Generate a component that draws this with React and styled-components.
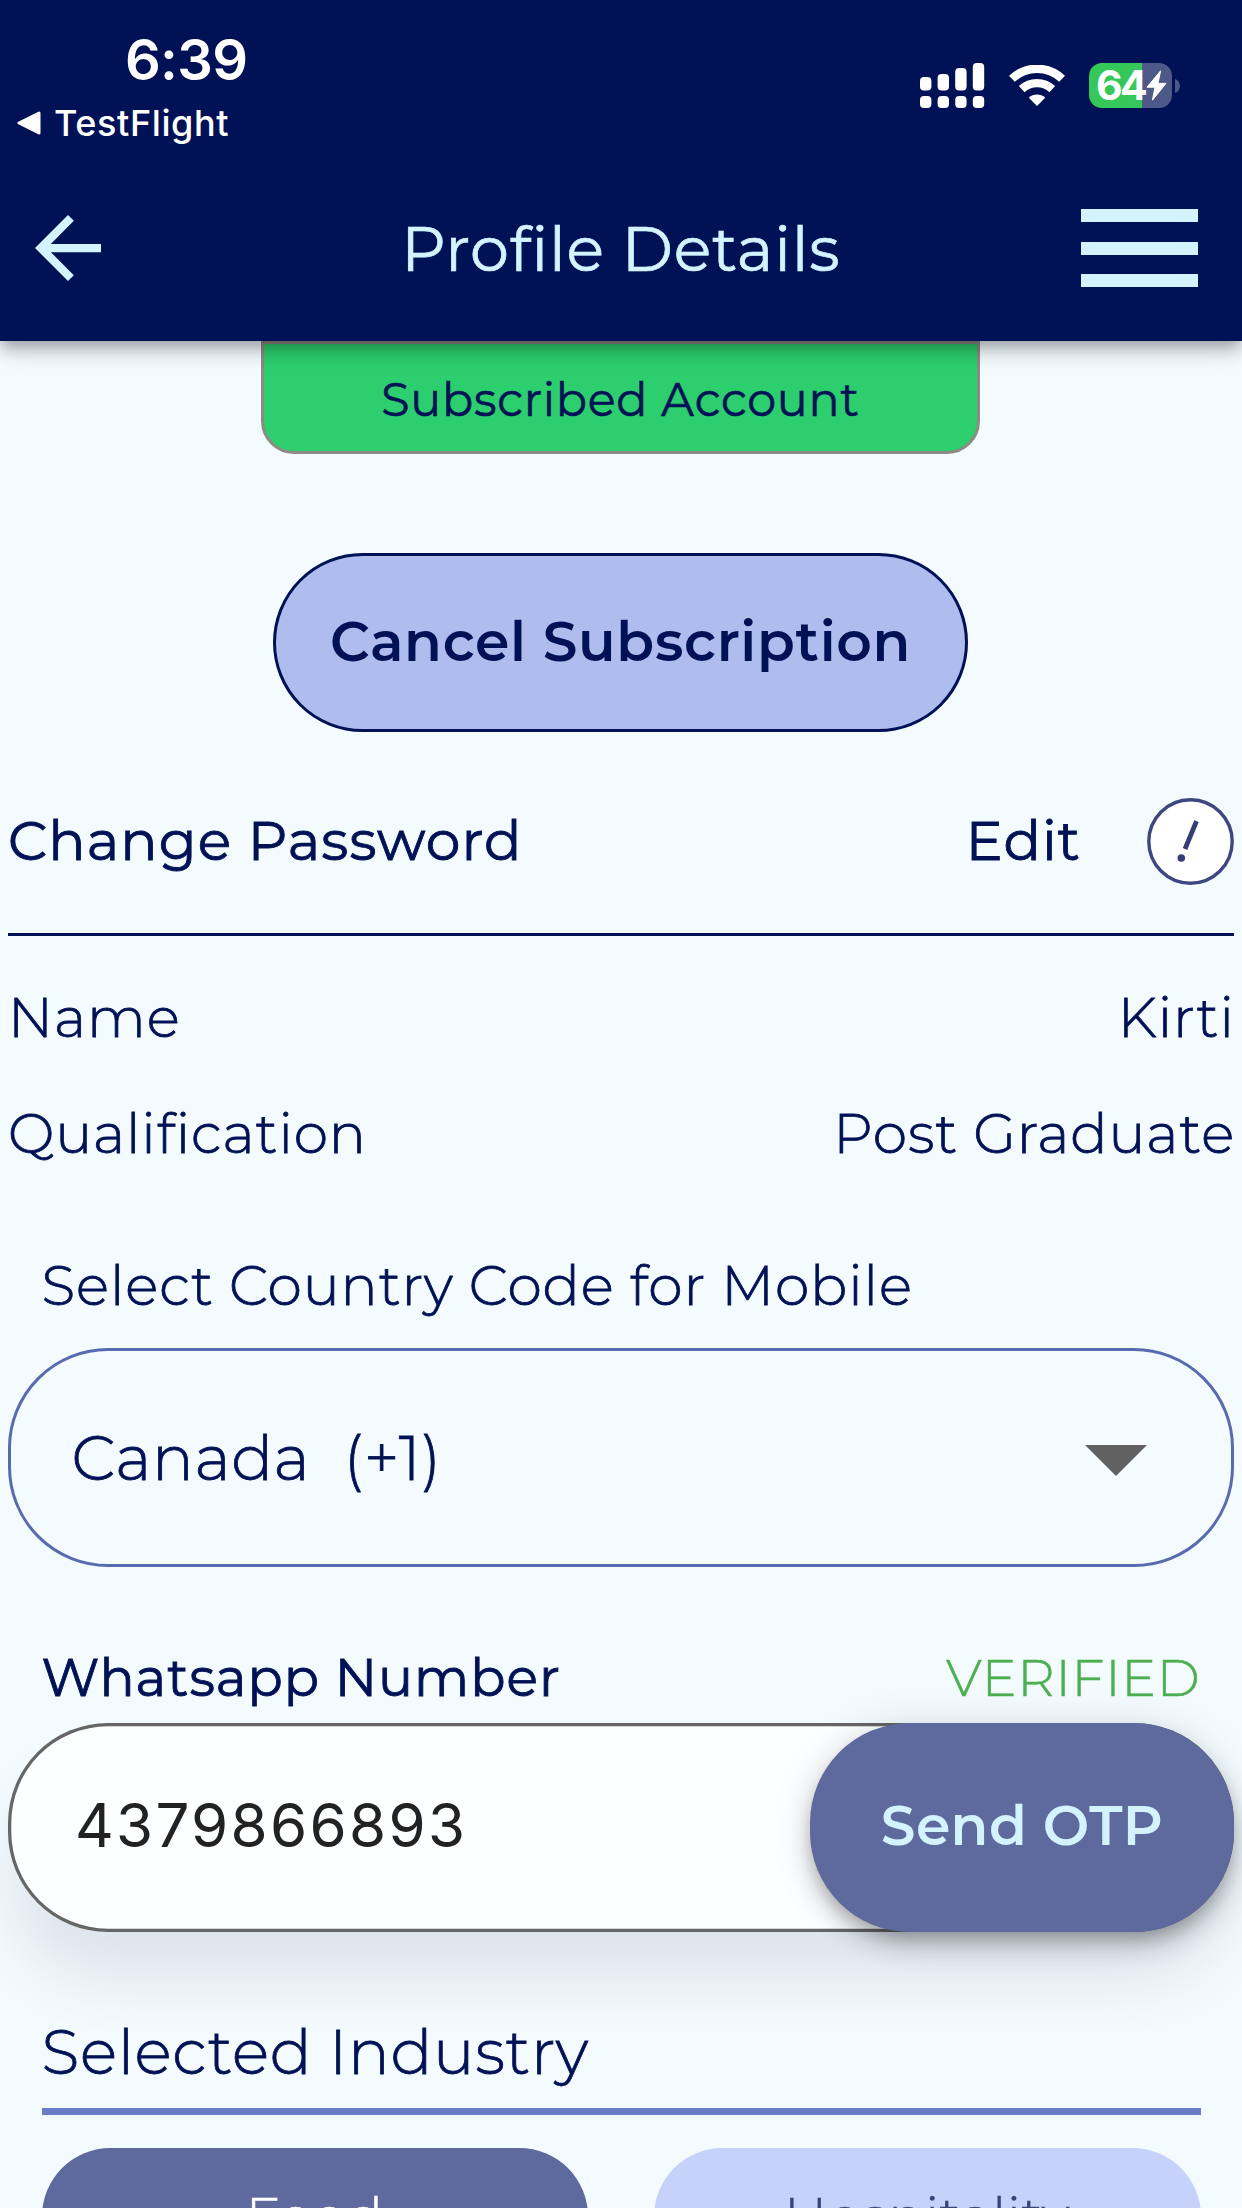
import React from "react";
import styled, { createGlobalStyle } from "styled-components";

const NAVY = "#001255";
const ICE = "#d3f4ff";
const SLATE = "#5e6a9e";
const brandFont = `"Montserrat", "Inter", sans-serif`;
const systemFont = `"Inter", "Roboto", sans-serif`;

const GlobalStyle = createGlobalStyle`
  *, *::before, *::after { box-sizing: border-box; }
  body {
    margin: 0;
    background: #f4fbff;
    color: ${NAVY};
    font-family: ${brandFont};
  }
  button { font-family: inherit; border: 0; padding: 0; margin: 0; color: inherit; }
  svg { display: block; }
`;

const Screen = styled.div`
  width: 1242px;
  height: 2208px;
  overflow: hidden;
  display: flex;
  flex-direction: column;
  background: #f4fbff;
`;

const Header = styled.header`
  position: relative;
  z-index: 1;
  flex: none;
  height: 341px;
  background: ${NAVY};
  box-shadow:
    0 6px 12px -3px rgba(0, 0, 0, 0.2),
    0 12px 15px 0 rgba(0, 0, 0, 0.14),
    0 3px 30px 0 rgba(0, 0, 0, 0.12);
`;

const StatusBar = styled.div`
  height: 156px;
  display: flex;
  justify-content: space-between;
  color: #fff;
  font-family: ${systemFont};
`;

const ClockColumn = styled.div`
  display: flex;
  flex-direction: column;
  padding-top: 28px;
`;

const Clock = styled.div`
  padding-left: 125px;
  font-size: 56px;
  font-weight: 600;
  line-height: 64px;
  letter-spacing: -0.7px;
`;

const BackToApp = styled.div`
  display: flex;
  align-items: center;
  gap: 13px;
  margin-top: 7px;
  padding-left: 17px;
  font-size: 36px;
  font-weight: 500;
  line-height: 48px;
  letter-spacing: 0.6px;
`;

const StatusIcons = styled.div`
  display: flex;
  align-items: flex-start;
  padding: 63px 62px 0 0;
`;

const WifiSlot = styled.div`
  margin: 2px 24.5px 0 24px;
`;

const Battery = styled.div`
  display: flex;
  align-items: center;
  gap: 3px;
`;

const BatteryBody = styled.div`
  display: flex;
  align-items: center;
  width: 83px;
  height: 45px;
  padding-left: 7px;
  border-radius: 13px;
  background: linear-gradient(to right, #35c759 64%, #4f5989 64%);
`;

const BatteryLevel = styled.span`
  width: 50px;
  font-size: 41px;
  font-weight: 700;
  line-height: 45px;
  letter-spacing: -2.6px;
`;

const NavBar = styled.nav`
  height: 185px;
  display: grid;
  grid-template-columns: 1fr auto 1fr;
  align-items: center;
  padding: 0 44.5px 1px 35px;
`;

const Title = styled.h1`
  margin: 1px 0 0 9px;
  color: ${ICE};
  font-size: 62px;
  font-weight: 400;
  line-height: 80px;
  letter-spacing: 0.8px;
  -webkit-text-stroke: 0.7px currentColor;
`;

const MenuButton = styled.button`
  justify-self: end;
  display: flex;
  flex-direction: column;
  gap: 19.5px;
  background: none;
`;

const MenuBar = styled.span`
  width: 117px;
  height: 13px;
  background: ${ICE};
`;

const Content = styled.main`
  display: flex;
  flex-direction: column;
  align-items: stretch;
  padding: 0 8px;
`;

const Badge = styled.div`
  align-self: center;
  width: 719px;
  height: 113px;
  margin-right: 1px;
  padding-top: 4px;
  border: 3px solid #8e8a86;
  border-radius: 0 0 33px 33px;
  background: #2dce6d;
  text-align: center;
  font-size: 46px;
  line-height: 104px;
  letter-spacing: 0.77px;
  -webkit-text-stroke: 0.6px currentColor;
`;

const CancelButton = styled.button`
  align-self: center;
  width: 695px;
  height: 179px;
  margin-top: 99px;
  margin-right: 1px;
  padding-bottom: 2px;
  border: 3.5px solid ${NAVY};
  border-radius: 90px;
  background: #afbcee;
  color: ${NAVY};
  font-size: 55.2px;
  font-weight: 600;
  letter-spacing: 0.7px;
`;

const PasswordRow = styled.div`
  display: flex;
  align-items: center;
  height: 87px;
  margin-top: 66px;
  font-size: 55.2px;
  letter-spacing: 1.12px;
  -webkit-text-stroke: 0.9px currentColor;
`;

const PasswordLabel = styled.span`
  flex: 1;
  padding-bottom: 3px;
`;

const EditLink = styled.span`
  margin-right: 66px;
  padding-bottom: 3px;
`;

const Divider = styled.hr`
  width: 100%;
  height: 3.5px;
  margin: 47.5px 0 24px;
  border: 0;
  background: ${NAVY};
`;

const DetailRow = styled.div`
  display: flex;
  justify-content: space-between;
  margin-right: -1px;
  font-size: 55.2px;
  font-weight: 300;
  line-height: 116px;
  letter-spacing: ${(p) => p.$tracking};
  -webkit-text-stroke: 0.8px currentColor;
`;

const FieldLabel = styled.div`
  margin: 54px 33.5px 22px;
  font-size: 55.2px;
  font-weight: 300;
  line-height: 80px;
  letter-spacing: 0.93px;
  -webkit-text-stroke: 0.8px currentColor;
`;

const Select = styled.div`
  display: flex;
  align-items: center;
  justify-content: space-between;
  height: 219px;
  padding: 0 84.5px 0 60.5px;
  border: 3.5px solid #566bb0;
  border-radius: 100px;
  font-size: 62px;
  font-weight: 300;
  letter-spacing: 0.6px;
  white-space: pre;
  -webkit-text-stroke: 0.8px currentColor;
`;

const CaretSlot = styled.div`
  padding-top: 6px;
`;

const PhoneHeading = styled.div`
  display: flex;
  justify-content: space-between;
  margin: 81px 33.5px 15px;
  font-size: 52px;
  line-height: 60px;
`;

const PhoneLabel = styled.span`
  letter-spacing: 1.03px;
  -webkit-text-stroke: 0.9px currentColor;
`;

const Verified = styled.span`
  color: #4caf50;
  font-weight: 300;
  letter-spacing: 0.75px;
  -webkit-text-stroke: 0.5px currentColor;
`;

const PhoneField = styled.div`
  display: flex;
  align-items: center;
  justify-content: space-between;
  height: 208.5px;
  border-radius: 100px;
  background: #fdfeff;
  box-shadow:
    inset 0 0 0 3.3px #666,
    0 50px 60px rgba(0, 8, 50, 0.09);
`;

const PhoneNumber = styled.span`
  padding: 0 0 5px 67px;
  color: #222;
  font-family: ${systemFont};
  font-size: 60px;
  letter-spacing: 2.3px;
`;

const OtpButton = styled.button`
  width: 424px;
  height: 208.5px;
  padding-bottom: 3px;
  border-radius: 100px;
  background: ${SLATE};
  color: ${ICE};
  font-size: 55.2px;
  font-weight: 600;
  letter-spacing: 0.4px;
  box-shadow:
    0 9px 15px -3px rgba(0, 0, 0, 0.2),
    0 15px 24px 0 rgba(0, 0, 0, 0.14),
    0 3px 42px 0 rgba(0, 0, 0, 0.12);
`;

const SectionTitle = styled.h2`
  margin: 80.5px 33.5px 0;
  padding-bottom: 16px;
  border-bottom: 7px solid #6a7cc5;
  font-size: 62px;
  font-weight: 300;
  line-height: 80px;
  letter-spacing: 0.72px;
  -webkit-text-stroke: 0.8px currentColor;
`;

const IndustryGrid = styled.div`
  display: grid;
  grid-template-columns: 1fr 1fr;
  gap: 66px;
  margin: 32.5px 33.5px 0;
`;

const IndustryPill = styled.div`
  height: 137px;
  border-radius: 70px;
  background: ${(p) => (p.$selected ? SLATE : "#c7d2fb")};
  color: ${(p) => (p.$selected ? "#fff" : "#3a4478")};
  text-align: center;
  font-size: 53px;
  font-weight: 300;
  line-height: 136px;
  letter-spacing: 1px;
  -webkit-text-stroke: 0.6px currentColor;
`;

const SignalIcon = () => (
  <svg width="65" height="45" viewBox="0 0 65 45" fill="#fff">
    {[14, 11, 5, 0].map((top, i) => (
      <g key={top}>
        <rect x={i * 17.6} y={top} width="11.4" height={27.5 - top} rx="4" />
        <rect x={i * 17.6} y="33" width="11.4" height="12" rx="4" />
      </g>
    ))}
  </svg>
);

const WifiIcon = () => (
  <svg width="56" height="41" viewBox="0 0 56 41" fill="none" stroke="#fff">
    <path d="M2.9 13.8a36.5 36.5 0 0 1 50.2 0" strokeWidth="8.4" />
    <path d="M12.7 24.1a22.5 22.5 0 0 1 30.6 0" strokeWidth="8.4" />
    <path d="M28 41l-8.2-8.3a12 12 0 0 1 16.4 0z" fill="#fff" stroke="none" />
  </svg>
);

const BoltIcon = () => (
  <svg width="21" height="31" viewBox="0 0 21 31">
    <path d="M14.6.8 1 17.2h8L6.4 30.2 20 13.4h-8z" fill="#fff" stroke="#fff" strokeLinejoin="round" />
  </svg>
);

const BatteryNub = () => (
  <svg width="5" height="14" viewBox="0 0 5 14">
    <path d="M0 0c3 1 5 4 5 7s-2 6-5 7z" fill="#4f5989" />
  </svg>
);

const CaretLeft = () => (
  <svg width="24" height="24" viewBox="0 0 24 24">
    <path d="M2 12 22 2v20z" fill="#fff" stroke="#fff" strokeWidth="3" strokeLinejoin="round" />
  </svg>
);

const ArrowBack = () => (
  <svg width="66" height="66" viewBox="4 4 16 16">
    <path fill={ICE} d="M20 11H7.83l5.59-5.59L12 4l-8 8 8 8 1.41-1.41L7.83 13H20v-2z" />
  </svg>
);

const CaretDown = () => (
  <svg width="62" height="31" viewBox="0 0 62 31">
    <path d="M0 0h62L31 31z" fill="#616161" />
  </svg>
);

const NoticeIcon = () => (
  <svg width="87" height="87" viewBox="0 0 87 87">
    <circle cx="43.5" cy="43.5" r="41.7" fill="#fff" stroke="#3f4780" strokeWidth="3.4" />
    <path d="M49.5 23.2 38 51" stroke="#343d78" strokeWidth="4.8" />
    <circle cx="34.3" cy="60" r="3.8" fill="#343d78" stroke="none" />
  </svg>
);

const details = [
  { label: "Name", value: "Kirti", tracking: "1px" },
  { label: "Qualification", value: "Post Graduate", tracking: "0.9px" },
];

const industries = [
  { name: "Food", selected: true },
  { name: "Hospitality", selected: false },
];

export default function App() {
  return (
    <>
      <GlobalStyle />
      <Screen>
        <Header>
          <StatusBar>
            <ClockColumn>
              <Clock>6:39</Clock>
              <BackToApp>
                <CaretLeft />
                TestFlight
              </BackToApp>
            </ClockColumn>
            <StatusIcons>
              <SignalIcon />
              <WifiSlot>
                <WifiIcon />
              </WifiSlot>
              <Battery>
                <BatteryBody>
                  <BatteryLevel>64</BatteryLevel>
                  <BoltIcon />
                </BatteryBody>
                <BatteryNub />
              </Battery>
            </StatusIcons>
          </StatusBar>
          <NavBar>
            <ArrowBack />
            <Title>Profile Details</Title>
            <MenuButton aria-label="Menu">
              <MenuBar />
              <MenuBar />
              <MenuBar />
            </MenuButton>
          </NavBar>
        </Header>

        <Content>
          <Badge>Subscribed Account</Badge>
          <CancelButton>Cancel Subscription</CancelButton>

          <PasswordRow>
            <PasswordLabel>Change Password</PasswordLabel>
            <EditLink>Edit</EditLink>
            <NoticeIcon />
          </PasswordRow>
          <Divider />

          {details.map((d) => (
            <DetailRow key={d.label} $tracking={d.tracking}>
              <span>{d.label}</span>
              <span>{d.value}</span>
            </DetailRow>
          ))}

          <FieldLabel>Select Country Code for Mobile</FieldLabel>
          <Select>
            <span>{"Canada  (+1)"}</span>
            <CaretSlot>
              <CaretDown />
            </CaretSlot>
          </Select>

          <PhoneHeading>
            <PhoneLabel>Whatsapp Number</PhoneLabel>
            <Verified>VERIFIED</Verified>
          </PhoneHeading>
          <PhoneField>
            <PhoneNumber>4379866893</PhoneNumber>
            <OtpButton>Send OTP</OtpButton>
          </PhoneField>

          <SectionTitle>Selected Industry</SectionTitle>
          <IndustryGrid>
            {industries.map((item) => (
              <IndustryPill key={item.name} $selected={item.selected}>
                {item.name}
              </IndustryPill>
            ))}
          </IndustryGrid>
        </Content>
      </Screen>
    </>
  );
}
